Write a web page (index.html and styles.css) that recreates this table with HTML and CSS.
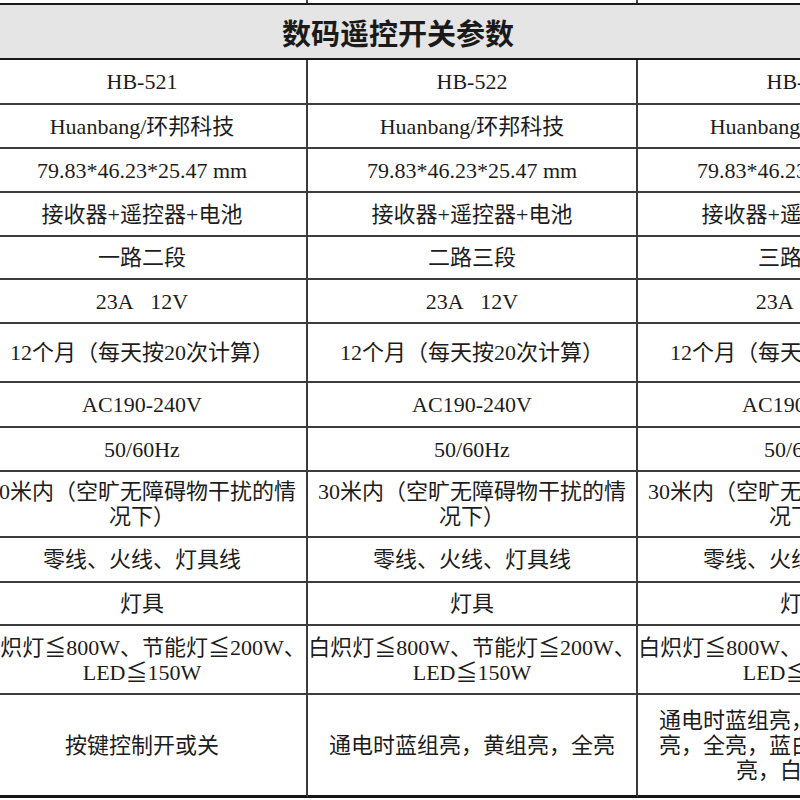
FILE: index.html
```html
<!DOCTYPE html>
<html lang="zh">
<head>
<meta charset="utf-8">
<title>数码遥控开关参数</title>
<link rel="stylesheet" href="styles.css">
</head>
<body>
<div class="sheet">
  <div class="strip"><span></span><span></span><span></span></div>
  <div class="title-row"><h1>数码遥控开关参数</h1></div>
  <div class="grid">
    <div class="cell">HB-521</div>
    <div class="cell">HB-522</div>
    <div class="cell">HB-523</div>

    <div class="cell">Huanbang/环邦科技</div>
    <div class="cell">Huanbang/环邦科技</div>
    <div class="cell">Huanbang/环邦科技</div>

    <div class="cell">79.83*46.23*25.47 mm</div>
    <div class="cell">79.83*46.23*25.47 mm</div>
    <div class="cell">79.83*46.23*25.47 mm</div>

    <div class="cell">接收器+遥控器+电池</div>
    <div class="cell">接收器+遥控器+电池</div>
    <div class="cell">接收器+遥控器+电池</div>

    <div class="cell">一路二段</div>
    <div class="cell">二路三段</div>
    <div class="cell">三路三段</div>

    <div class="cell">23A&nbsp;&nbsp;&nbsp;12V</div>
    <div class="cell">23A&nbsp;&nbsp;&nbsp;12V</div>
    <div class="cell">23A&nbsp;&nbsp;&nbsp;12V</div>

    <div class="cell">12个月（每天按20次计算）</div>
    <div class="cell">12个月（每天按20次计算）</div>
    <div class="cell">12个月（每天按20次计算）</div>

    <div class="cell">AC190-240V</div>
    <div class="cell">AC190-240V</div>
    <div class="cell">AC190-240V</div>

    <div class="cell">50/60Hz</div>
    <div class="cell">50/60Hz</div>
    <div class="cell">50/60Hz</div>

    <div class="cell"><span class="lines">30米内（空旷无障碍物干扰的情<br>况下）</span></div>
    <div class="cell"><span class="lines">30米内（空旷无障碍物干扰的情<br>况下）</span></div>
    <div class="cell"><span class="lines">30米内（空旷无障碍物干扰的情<br>况下）</span></div>

    <div class="cell">零线、火线、灯具线</div>
    <div class="cell">零线、火线、灯具线</div>
    <div class="cell">零线、火线、灯具线</div>

    <div class="cell">灯具</div>
    <div class="cell">灯具</div>
    <div class="cell">灯具</div>

    <div class="cell"><span class="lines">白炽灯≦800W、节能灯≦200W、<br>LED≦150W</span></div>
    <div class="cell"><span class="lines">白炽灯≦800W、节能灯≦200W、<br>LED≦150W</span></div>
    <div class="cell"><span class="lines">白炽灯≦800W、节能灯≦200W、<br>LED≦150W</span></div>

    <div class="cell last">按键控制开或关</div>
    <div class="cell last">通电时蓝组亮，黄组亮，全亮</div>
    <div class="cell last"><span class="lines">通电时蓝组亮，黄组亮，白组<br>亮，全亮，蓝白组亮，黄白组<br>亮，白黄组亮</span></div>
  </div>
</div>
</body>
</html>
```

FILE: styles.css
```css
html, body {
  margin: 0;
  padding: 0;
  background: #ffffff;
  overflow: hidden;
}

body {
  width: 800px;
  height: 800px;
  font-family: "Liberation Serif", "Noto Sans CJK SC", serif;
  color: #1c1c1c;
}

.sheet {
  margin-left: -22px;
  width: 990px;
}

.strip {
  display: grid;
  grid-template-columns: repeat(3, 330px);
  height: 3px;
}

.strip span {
  border-right: 2px solid #444444;
}

.title-row {
  box-sizing: border-box;
  height: 57px;
  border-top: 2px solid #1a1a1a;
  border-bottom: 2px solid #1a1a1a;
  background: #e5e5e5;
  display: flex;
  align-items: center;
  padding-left: 304px;
}

.title-row h1 {
  margin: 0;
  font-family: "Noto Sans CJK SC", sans-serif;
  font-size: 29px;
  font-weight: 700;
  line-height: 1;
  color: #1a1a1a;
  padding-top: 2px;
}

.grid {
  display: grid;
  grid-template-columns: repeat(3, 330px);
  grid-template-rows: 45px 44px 44px 44px 43px 44px 59px 45px 44px 66px 45px 43px 69px 103px;
}

.cell {
  box-sizing: border-box;
  border-right: 2px solid #3c3c3c;
  border-bottom: 2px solid #3c3c3c;
  display: flex;
  align-items: center;
  justify-content: center;
  text-align: center;
  padding: 0 4px;
  font-size: 22px;
  line-height: 25px;
  white-space: nowrap;
}

.cell.last {
  border-bottom: 3px solid #151515;
}

.lines {
  display: block;
}
```
